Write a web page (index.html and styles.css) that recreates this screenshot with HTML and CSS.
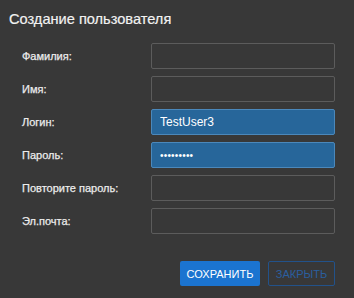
FILE: index.html
```html
<!DOCTYPE html>
<html lang="ru">
<head>
<meta charset="utf-8">
<link rel="stylesheet" href="styles.css">
</head>
<body>
<div class="dialog">
  <h1 class="title">Создание пользователя</h1>
  <form class="form">
    <label class="lbl">Фамилия:</label><input class="inp" type="text">
    <label class="lbl">Имя:</label><input class="inp" type="text">
    <label class="lbl">Логин:</label><input class="inp filled" type="text" value="TestUser3">
    <label class="lbl">Пароль:</label><input class="inp filled pw" type="password" value="123456789">
    <label class="lbl">Повторите пароль:</label><input class="inp" type="password">
    <label class="lbl">Эл.почта:</label><input class="inp" type="text">
  </form>
  <div class="actions">
    <button class="btn primary" type="button">СОХРАНИТЬ</button>
    <button class="btn outline" type="button">ЗАКРЫТЬ</button>
  </div>
</div>
</body>
</html>
```
FILE: styles.css
```css
html, body {
  margin: 0;
  padding: 0;
  background: #383838;
  font-family: "Liberation Sans", Arial, sans-serif;
}
.dialog {
  width: 354px;
  height: 298px;
  box-sizing: border-box;
  padding: 9px 19px 0 9px;
}
.title {
  margin: 0;
  font-size: 14.6px;
  font-weight: normal;
  color: #f2f2f2;
  line-height: 20px;
  -webkit-text-stroke: 0.2px #f2f2f2;
}
.form {
  display: grid;
  grid-template-columns: 129px 184px;
  row-gap: 7px;
  align-items: center;
  margin: 14px 0 0 13px;
}
.lbl {
  font-size: 11px;
  font-weight: normal;
  color: #ececec;
  -webkit-text-stroke: 0.25px #ececec;
}
.inp {
  box-sizing: border-box;
  height: 26px;
  width: 184px;
  margin: 0;
  border: 1px solid #5c5c5c;
  border-radius: 2px;
  background: #383838;
  color: #ffffff;
  font-family: "Liberation Sans", Arial, sans-serif;
  font-size: 12px;
  padding: 0 8px;
  outline: none;
}
.inp.filled {
  background: #27669a;
  border-color: #4b88bb;
}
.inp.pw {
  font-size: 10px;
  letter-spacing: 0.2px;
}
.actions {
  display: flex;
  justify-content: flex-end;
  gap: 8px;
  margin-top: 27px;
}
.btn {
  box-sizing: border-box;
  height: 25px;
  border-radius: 2px;
  font-family: "Liberation Sans", Arial, sans-serif;
  font-size: 11px;
  padding: 0;
  cursor: pointer;
}
.primary {
  width: 80px;
  background: #1b74d0;
  border: none;
  color: #ffffff;
}
.outline {
  width: 67px;
  background: transparent;
  border: 1px solid #22528a;
  color: #2a5f9f;
}
```
